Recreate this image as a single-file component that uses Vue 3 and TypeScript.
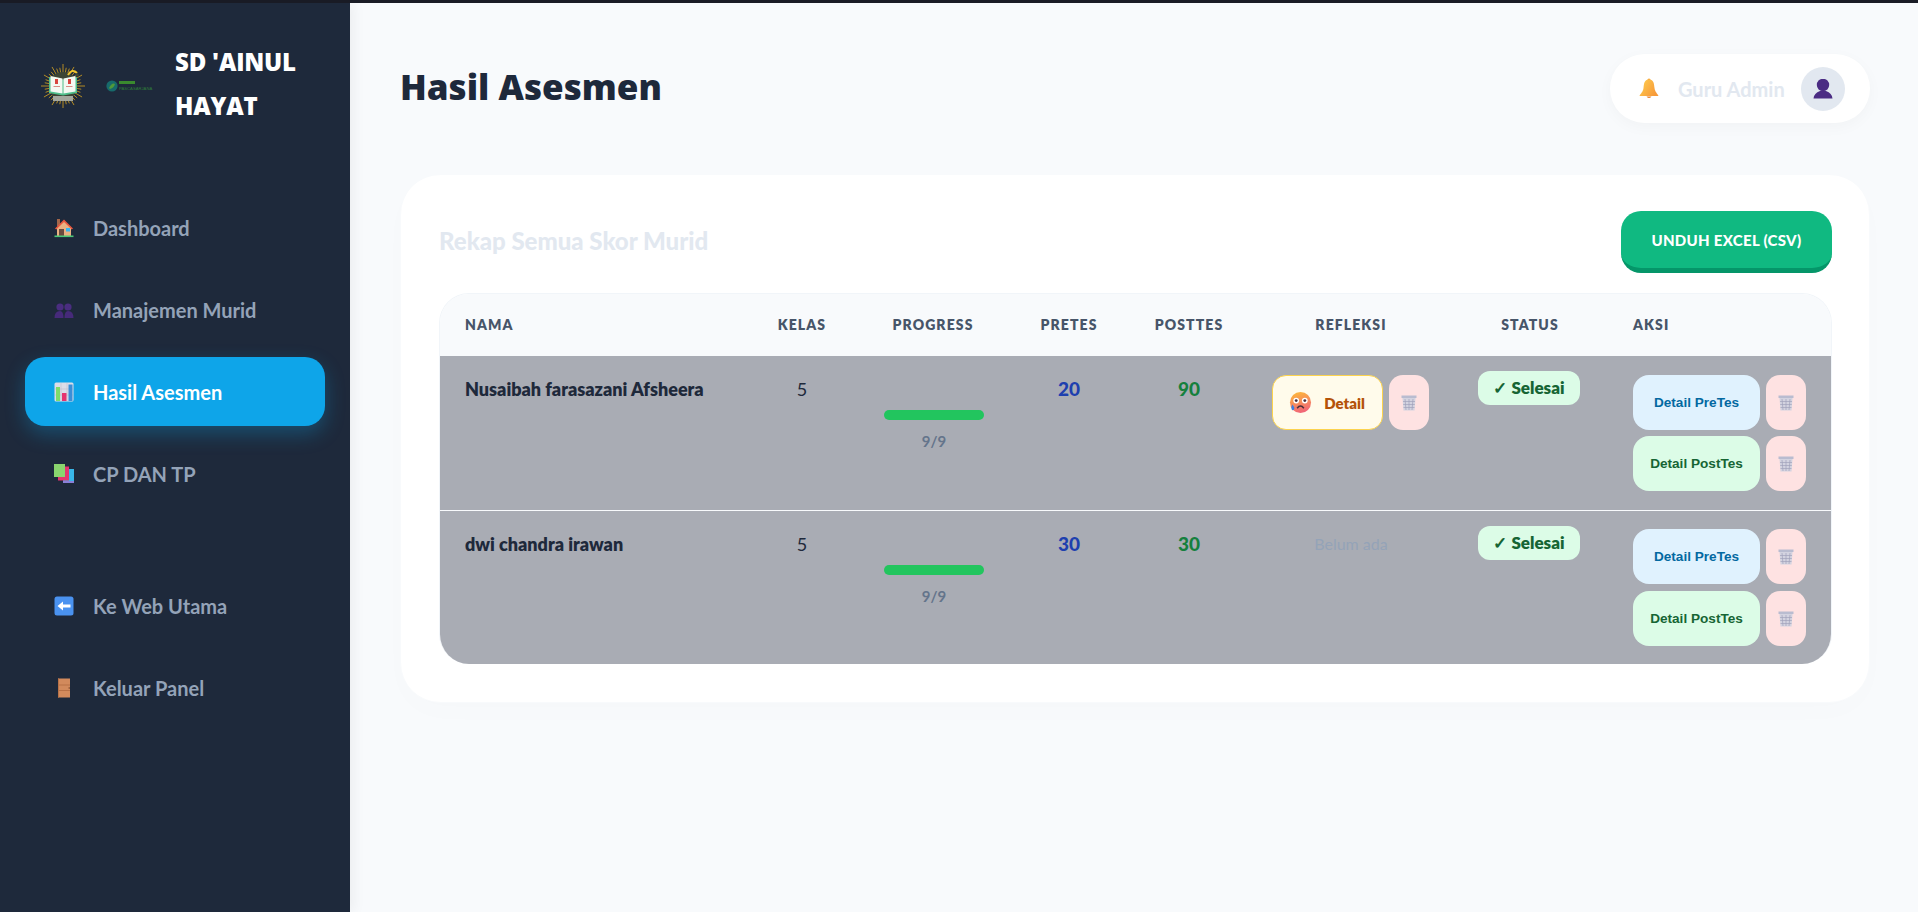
<script setup lang="ts">
const rays = Array.from({ length: 36 }, (_, i) => {
  const a = (i / 36) * Math.PI * 2
  const r1 = 13
  const r2 = i % 3 === 0 ? 22 : 18.500
  return {
    x1: 22 + Math.cos(a) * r1,
    y1: 22 + Math.sin(a) * r1,
    x2: 22 + Math.cos(a) * r2,
    y2: 22 + Math.sin(a) * r2,
  }
})

const mainNav = [
  { icon: 'house', label: 'Dashboard', active: false },
  { icon: 'people', label: 'Manajemen Murid', active: false },
  { icon: 'chart', label: 'Hasil Asesmen', active: true },
  { icon: 'books', label: 'CP DAN TP', active: false },
]
const subNav = [
  { icon: 'back', label: 'Ke Web Utama', active: false },
  { icon: 'door', label: 'Keluar Panel', active: false },
]
const columns = [
  { label: 'Nama', cls: 'c-name' },
  { label: 'Kelas', cls: 'c-kelas center' },
  { label: 'Progress', cls: 'c-prog center' },
  { label: 'Pretes', cls: 'c-pre center' },
  { label: 'Posttes', cls: 'c-post center' },
  { label: 'Refleksi', cls: 'c-ref center' },
  { label: 'Status', cls: 'c-stat center' },
  { label: 'Aksi', cls: 'c-aksi' },
]
const rows = [
  { name: 'Nusaibah farasazani Afsheera', kelas: 5, pre: 20, post: 90, refleksi: true },
  { name: 'dwi chandra irawan', kelas: 5, pre: 30, post: 30, refleksi: false },
]
</script>

<template>
  <div class="topline"></div>
  <div class="app">
    <aside class="sidebar">
      <div class="brand">
        <svg class="logo-a" viewBox="0 0 44 44" aria-hidden="true">
          <line v-for="(r, i) in rays" :key="i" :x1="r.x1" :y1="r.y1" :x2="r.x2" :y2="r.y2" stroke="#d9a520" stroke-width="0.8" />
          <circle cx="22" cy="22" r="14" fill="#3d4434" />
          <path d="M8 13 L22 15.500 L36 13 V29 L22 31.500 L8 29Z" fill="#4fbf8b" />
          <path d="M9.500 12 L21.500 14.500 V29.500 L9.500 27.500Z" fill="#f4f8f2" />
          <path d="M34.500 12 L22.500 14.500 V29.500 L34.500 27.500Z" fill="#f4f8f2" />
          <rect x="14" y="15" width="3" height="5" fill="#d8453f" />
          <rect x="27" y="15" width="3" height="5" fill="#d8453f" />
          <rect x="12.500" y="22" width="6.500" height="1" fill="#d98c84" />
          <rect x="25" y="22" width="6.500" height="1" fill="#d98c84" />
          <path d="M27 11 Q31 4 36 9" fill="none" stroke="#eec22f" stroke-width="2" />
          <circle cx="36" cy="11" r="1.800" fill="#3d4434" />
          <rect x="12" y="32" width="20" height="5" fill="#a3a79d" />
        </svg>
        <svg class="logo-b" viewBox="0 0 49 12" aria-hidden="true">
          <circle cx="6" cy="6" r="5.600" fill="#176a6b" />
          <path d="M3 8 Q6 2 9 4 Q8 8 4 9Z" fill="#4f9a3a" />
          <rect x="13" y="1" width="16" height="3" fill="#3a8a2e" />
          <text x="13" y="9.500" class="logo-b-text">PASCASARJANA</text>
        </svg>
        <div class="brand-name">SD 'AINUL HAYAT</div>
      </div>

      <nav class="nav">
        <div class="nav-group">
          <a v-for="n in mainNav" :key="n.label" class="nav-item" :class="{ active: n.active }">
            <svg class="nav-icon" viewBox="0 0 20 20" aria-hidden="true">
              <template v-if="n.icon === 'house'">
                <rect x="3" y="1" width="3" height="7" fill="#a2664a" />
                <path d="M3 10 L10 3 L17 10 V18 H3Z" fill="#eab183" />
                <path d="M1 10.500 L10 1.500 L19 10.500 L17.800 11.600 L10 4 L2.200 11.600Z" fill="#e9573f" />
                <rect x="5" y="11" width="5" height="7" fill="#6b4a3e" />
                <rect x="12" y="10" width="4" height="3.500" fill="#38b6f0" />
                <rect x="0.500" y="17.500" width="19" height="1.600" fill="#4cc777" />
              </template>
              <template v-else-if="n.icon === 'people'">
                <circle cx="6" cy="7" r="3.600" fill="#4a2d80" />
                <circle cx="14" cy="7" r="3.600" fill="#4a2d80" />
                <path d="M0.500 18 Q0.500 11 6 11 Q9.500 11 9.500 18Z" fill="#462a7a" />
                <path d="M10.500 18 Q10.500 11 14 11 Q19.500 11 19.500 18Z" fill="#462a7a" />
              </template>
              <template v-else-if="n.icon === 'chart'">
                <rect x="0.500" y="0.500" width="19" height="19" rx="1.500" fill="#dcdde8" />
                <path d="M7 1 V19 M13 1 V19 M1 7 H19 M1 13 H19" stroke="#b8b9c8" stroke-width="0.500" />
                <rect x="2" y="5" width="4" height="14" fill="#7fdc6a" />
                <rect x="8" y="11" width="4.500" height="8" fill="#e5336f" />
                <rect x="14.500" y="2.500" width="4" height="16.500" fill="#3a8fd8" />
              </template>
              <template v-else>
                <rect x="9" y="5" width="11" height="14" fill="#8a7fd8" />
                <rect x="9" y="5" width="11" height="12" fill="#38b6e8" />
                <rect x="4" y="2.500" width="11" height="14" fill="#e5336f" />
                <rect x="0" y="0" width="11" height="13" fill="#8ad46e" />
              </template>
            </svg>
            <span>{{ n.label }}</span>
          </a>
        </div>
        <div class="nav-group">
          <a v-for="n in subNav" :key="n.label" class="nav-item">
            <svg class="nav-icon" viewBox="0 0 20 20" aria-hidden="true">
              <template v-if="n.icon === 'back'">
                <rect x="0.500" y="0.500" width="19" height="19" rx="2.500" fill="#4a92f0" />
                <path d="M3.500 10 L9 5.500 V8.500 H16.500 V11.500 H9 V14.500Z" fill="#fff" />
              </template>
              <template v-else>
                <rect x="4" y="0.500" width="12" height="19" fill="#d28a5c" />
                <path d="M4 7 H16 M4 12.500 H16" stroke="#b06a40" stroke-width="0.800" />
                <rect x="4" y="0.500" width="1" height="19" fill="#b87248" />
                <rect x="14.700" y="9" width="1" height="2" fill="#8a5230" />
              </template>
            </svg>
            <span>{{ n.label }}</span>
          </a>
        </div>
      </nav>
    </aside>

    <main class="main">
      <header class="page-head">
        <h1 class="page-title">Hasil Asesmen</h1>
        <div class="user-pill">
          <svg class="bell" viewBox="0 0 20 21" aria-hidden="true">
            <defs>
              <linearGradient id="bellg" x1="0" y1="0" x2="1" y2="0.600">
                <stop offset="0" stop-color="#ffd050" />
                <stop offset="1" stop-color="#f79a3a" />
              </linearGradient>
            </defs>
            <circle cx="10" cy="2" r="1.600" fill="#f5a63c" />
            <path d="M10 1.500 C5 1.500 5 6 4.500 10 C4 14 1.500 15.500 0.500 18 H19.500 C18.500 15.500 16 14 15.500 10 C15 6 15 1.500 10 1.500Z" fill="url(#bellg)" />
            <path d="M7.500 18.500 Q10 21.500 12.500 18.500Z" fill="#e8832f" />
          </svg>
          <span class="user-name">Guru Admin</span>
          <div class="avatar">
            <svg viewBox="0 0 20 20" aria-hidden="true">
              <ellipse cx="10" cy="6" rx="6.200" ry="6.200" fill="#4b2c83" />
              <path d="M0.500 19.500 Q1 14 7 12 L13 12 Q19 14 19.500 19.500Z" fill="#4b2c83" />
            </svg>
          </div>
        </div>
      </header>

      <section class="card">
        <div class="card-head">
          <h2 class="card-title">Rekap Semua Skor Murid</h2>
          <button class="btn-export" type="button">UNDUH EXCEL (CSV)</button>
        </div>
        <div class="table-wrap">
          <table class="table">
            <thead>
              <tr>
                <th v-for="c in columns" :key="c.label" :class="c.cls">{{ c.label }}</th>
              </tr>
            </thead>
            <tbody>
              <tr v-for="r in rows" :key="r.name">
                <td class="t-name">{{ r.name }}</td>
                <td class="center t-kelas">{{ r.kelas }}</td>
                <td class="center t-prog">
                  <div class="bar"></div>
                  <div class="bar-label">9/9</div>
                </td>
                <td class="center t-pre">{{ r.pre }}</td>
                <td class="center t-post">{{ r.post }}</td>
                <td class="center t-ref">
                  <div v-if="r.refleksi" class="btn-line ref-line">
                    <button class="btn-feel" type="button">
                      <svg class="feel-icon" viewBox="0 0 24 24" aria-hidden="true">
                        <defs>
                          <linearGradient id="faceg" x1="0.300" y1="0" x2="0.600" y2="1">
                            <stop offset="0" stop-color="#fcb73c" />
                            <stop offset="1" stop-color="#f0627a" />
                          </linearGradient>
                        </defs>
                        <circle cx="12" cy="12" r="11" fill="url(#faceg)" />
                        <circle cx="7.500" cy="10" r="3" fill="#fff" />
                        <circle cx="16.500" cy="10" r="3" fill="#fff" />
                        <circle cx="7.500" cy="10" r="1.500" fill="#4a2f3a" />
                        <circle cx="16.500" cy="10" r="1.500" fill="#4a2f3a" />
                        <path d="M8.500 18 Q12 13.500 15.500 18" fill="none" stroke="#4a2f3a" stroke-width="1.600" />
                        <path d="M3.500 14 Q1.500 18 3.500 20 Q6 20 5.500 17Z" fill="#3a7fe0" />
                      </svg>
                      <span>Detail</span>
                    </button>
                    <button class="btn-trash" type="button">
                      <svg class="trash" viewBox="0 0 16 16" aria-hidden="true">
                        <rect x="0.500" y="0.500" width="15" height="2.500" fill="#b9bcd0" />
                        <path d="M1.500 3 H14.500 L13.500 15.500 H2.500Z" fill="#d3d3e0" />
                        <path d="M4 4 L5 15 M8 4 V15 M12 4 L11 15 M2 6.500 H14 M2.200 9.500 H13.800 M2.500 12.500 H13.500" stroke="#a0a2ba" stroke-width="0.700" />
                      </svg>
                    </button>
                  </div>
                  <span v-else class="no-ref">Belum ada</span>
                </td>
                <td class="center t-stat"><span class="badge">✓ Selesai</span></td>
                <td class="t-aksi">
                  <div class="aksi">
                    <div class="btn-line">
                      <button class="btn-detail pre" type="button">Detail PreTes</button>
                      <button class="btn-trash" type="button">
                        <svg class="trash" viewBox="0 0 16 16" aria-hidden="true">
                          <rect x="0.500" y="0.500" width="15" height="2.500" fill="#b9bcd0" />
                          <path d="M1.500 3 H14.500 L13.500 15.500 H2.500Z" fill="#d3d3e0" />
                          <path d="M4 4 L5 15 M8 4 V15 M12 4 L11 15 M2 6.500 H14 M2.200 9.500 H13.800 M2.500 12.500 H13.500" stroke="#a0a2ba" stroke-width="0.700" />
                        </svg>
                      </button>
                    </div>
                    <div class="btn-line">
                      <button class="btn-detail post" type="button">Detail PostTes</button>
                      <button class="btn-trash" type="button">
                        <svg class="trash" viewBox="0 0 16 16" aria-hidden="true">
                          <rect x="0.500" y="0.500" width="15" height="2.500" fill="#b9bcd0" />
                          <path d="M1.500 3 H14.500 L13.500 15.500 H2.500Z" fill="#d3d3e0" />
                          <path d="M4 4 L5 15 M8 4 V15 M12 4 L11 15 M2 6.500 H14 M2.200 9.500 H13.800 M2.500 12.500 H13.500" stroke="#a0a2ba" stroke-width="0.700" />
                        </svg>
                      </button>
                    </div>
                  </div>
                </td>
              </tr>
            </tbody>
          </table>
        </div>
      </section>
    </main>
  </div>
</template>

<style>
html, body { margin: 0; background: #f8fafc; overflow: hidden; }
</style>

<style scoped>
.topline { height: 3px; background: #1a1c26; }
.app {
  display: flex;
  height: 909px;
  font-family: Lato, "Noto Sans", sans-serif;
  background: #f8fafc;
}
.sidebar {
  width: 350px;
  flex: none;
  background: #1e293b;
  box-shadow: 4px 0 12px rgba(0, 0, 0, 0.05);
  padding: 37px 25px 0;
  box-sizing: border-box;
}
.brand {
  display: flex;
  align-items: center;
  padding-left: 16px;
  height: 88px;
}
.logo-a { width: 44px; height: 46px; flex: none; margin-top: 3px; }
.logo-b { width: 49px; height: 12px; flex: none; margin-left: 21px; margin-top: 3px; overflow: visible; }
.logo-b-text { font-size: 4.200px; fill: #2f7d3a; font-family: "Liberation Sans", sans-serif; }
.brand-name {
  margin-left: 20px;
  width: 140px;
  font-family: "Open Sans", sans-serif;
  font-weight: 800;
  font-size: 24px;
  letter-spacing: -0.200px;
  line-height: 44px;
  color: #fff;
}
.nav { margin-top: 65px; display: flex; flex-direction: column; gap: 63px; }
.nav-group { display: flex; flex-direction: column; gap: 13px; }
.nav-item {
  display: flex;
  align-items: center;
  gap: 19px;
  height: 69px;
  padding-left: 29px;
  border-radius: 20px;
  color: #94a3b8;
  font-size: 20px;
  font-weight: 700;
}
.nav-item.active {
  background: #0ea5e9;
  color: #fff;
  box-shadow: 0 8px 20px rgba(14, 165, 233, 0.3);
}
.nav-icon { width: 20px; height: 20px; flex: none; }

.main {
  flex: 1;
  min-width: 0;
  padding: 51px 48px 0 50px;
  box-sizing: border-box;
}
.page-head {
  display: flex;
  align-items: center;
  justify-content: space-between;
  height: 69px;
  margin-bottom: 51px;
}
.page-title {
  margin: 0 0 4px;
  font-family: "Open Sans", sans-serif;
  font-weight: 800;
  font-size: 35px;
  color: #1e293b;
}
.user-pill {
  display: flex;
  align-items: center;
  height: 69px;
  width: 260px;
  box-sizing: border-box;
  padding-left: 29px;
  border-radius: 35px;
  background: #fff;
  box-shadow: 0 4px 15px rgba(0, 0, 0, 0.03);
}
.bell { width: 20px; height: 21px; flex: none; }
.user-name {
  margin-left: 19px;
  width: 108px;
  font-size: 20px;
  font-weight: 700;
  color: #e2e8f0;
  white-space: nowrap;
}
.avatar {
  margin-left: 15px;
  width: 44px;
  height: 44px;
  border-radius: 50%;
  background: #e2e8f0;
  display: flex;
  align-items: center;
  justify-content: center;
}
.avatar svg { width: 20px; height: 20px; }

.card {
  background: #fff;
  border-radius: 40px;
  border: 1px solid #f8fafc;
  padding: 36px 37px 38px 38px;
  box-shadow: 0 10px 30px rgba(0, 0, 0, 0.01);
}
.card-head {
  display: flex;
  align-items: center;
  justify-content: space-between;
  height: 62px;
  margin-bottom: 20px;
}
.card-title {
  margin: 0 0 4px;
  font-size: 24px;
  font-weight: 900;
  color: #e2e8f0;
}
.btn-export {
  width: 211px;
  height: 62px;
  border: 0;
  border-bottom: 5px solid #059669;
  border-radius: 20px;
  background: #10b981;
  color: #fff;
  font-family: Lato, sans-serif;
  font-weight: 900;
  font-size: 15px;
  letter-spacing: 0.300px;
}
.table-wrap {
  border-radius: 30px;
  overflow: hidden;
  border: 1px solid #f1f5f9;
  border-bottom: 0;
}
.table {
  width: 100%;
  table-layout: fixed;
  border-collapse: collapse;
}
th {
  box-sizing: border-box;
  height: 62px;
  padding: 0 0 2px;
  background: #f8fafc;
  text-align: left;
  color: #475569;
  font-size: 14px;
  font-weight: 800;
  letter-spacing: 1.100px;
  text-transform: uppercase;
}
.center { text-align: center; }
.c-name { width: 308px; padding-left: 25px; }
.c-kelas { width: 108px; }
.c-prog { width: 154px; }
.c-pre { width: 118px; }
.c-post { width: 122px; }
.c-ref { width: 202px; }
.c-stat { width: 156px; }
.c-aksi { padding-left: 25px; }

td {
  background: #a9acb4;
  vertical-align: top;
  padding: 19px 0 0;
  font-size: 17px;
  line-height: 28px;
  color: #1e293b;
  border-bottom: 1px solid #f8fafc;
}
tbody tr:last-child td { border-bottom: 0; }
.t-name { padding-left: 25px; font-weight: 800; font-size: 18px; white-space: nowrap; }
.t-kelas { color: #1e293b; font-size: 18px; }
.t-prog { padding-left: 2px; }
.t-pre { color: #1e40af; font-weight: 900; font-size: 19px; }
.t-post { color: #15803d; font-weight: 900; font-size: 19px; }
.bar {
  width: 100px;
  height: 10px;
  margin: 35px auto 0;
  border-radius: 5px;
  background: #22c55e;
}
.bar-label {
  margin-top: 9px;
  font-size: 15px;
  font-weight: 700;
  line-height: 24px;
  color: #64748b;
}
.ref-line { justify-content: center; padding-right: 2px; }
.no-ref { font-size: 16px; color: #94a3b8; font-weight: 400; display: inline-block; }
.t-stat { padding-top: 15px; padding-right: 2px; }
.badge {
  display: inline-block;
  width: 102px;
  height: 34px;
  line-height: 34px;
  border-radius: 12px;
  background: #dcfce7;
  color: #166534;
  font-size: 17px;
  font-weight: 800;
}
.btn-line { display: flex; gap: 6px; }
.t-aksi { padding-bottom: 19px; }
tbody tr:last-child .t-aksi { padding-top: 18px; padding-bottom: 18px; }
.aksi { display: flex; flex-direction: column; gap: 6px; padding-left: 25px; }
tbody tr:last-child .aksi { gap: 7px; }
button { cursor: pointer; font-family: "Liberation Sans", Arial, sans-serif; }
.btn-feel {
  width: 111px;
  height: 55px;
  box-sizing: border-box;
  display: flex;
  align-items: center;
  justify-content: center;
  gap: 12px;
  border: 1px solid #fcd34d;
  border-radius: 14px;
  background: #fffbeb;
  color: #b45309;
  font-family: Lato, sans-serif;
  font-size: 15px;
  font-weight: 800;
  padding: 0;
}
.feel-icon { width: 23px; height: 23px; flex: none; }
.btn-trash {
  width: 40px;
  height: 55px;
  padding: 0;
  border: 0;
  border-radius: 14px;
  background: #fee2e2;
  display: flex;
  align-items: center;
  justify-content: center;
}
.trash { width: 16px; height: 16px; }
.btn-detail {
  width: 127px;
  height: 55px;
  padding: 0;
  border: 0;
  border-radius: 16px;
  font-size: 13.600px;
  font-weight: 700;
}
.btn-detail.pre { background: #e0f2fe; color: #0369a1; }
.btn-detail.post { background: #dcfce7; color: #166534; }
</style>
